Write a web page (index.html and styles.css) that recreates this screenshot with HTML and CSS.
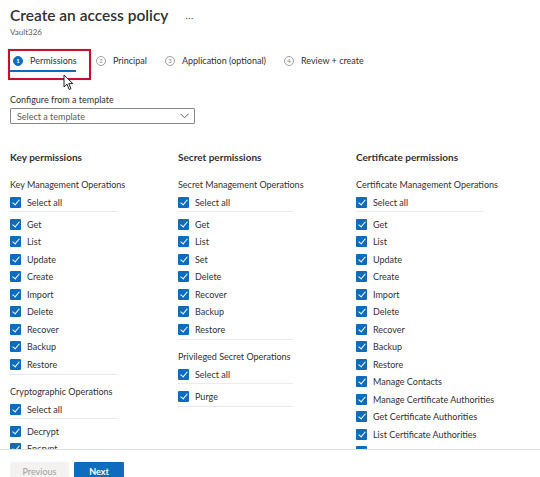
FILE: index.html
```html
<!DOCTYPE html>
<html>
<head>
<meta charset="utf-8">
<link rel="stylesheet" href="styles.css">
</head>
<body>
<div class="page">
  <div class="main">
    <div class="title-row">
      <h1 class="title">Create an access policy</h1>
      <span class="more">···</span>
    </div>
    <div class="subtitle">Vault326</div>

    <div class="tabs">
      <div class="tab tab-active">
        <span class="num num-active">1</span>
        <span class="tab-label">Permissions</span>
      </div>
      <div class="tab">
        <span class="num">2</span>
        <span class="tab-label">Principal</span>
      </div>
      <div class="tab">
        <span class="num">3</span>
        <span class="tab-label">Application (optional)</span>
      </div>
      <div class="tab">
        <span class="num">4</span>
        <span class="tab-label">Review + create</span>
      </div>
      <svg class="cursor" width="11" height="17" viewBox="0 0 11 17"><path d="M1 1 L1 13 L4 10.2 L6.2 15.5 L8 14.7 L5.8 9.6 L9.8 9.6 Z" fill="#fff" stroke="#222" stroke-width="1" stroke-linejoin="round"/></svg>
    </div>

    <div class="template">
      <div class="field-label">Configure from a template</div>
      <div class="select">
        <span>Select a template</span>
        <svg width="9" height="6" viewBox="0 0 9 6"><path d="M0.5 0.8 L4.5 4.8 L8.5 0.8" fill="none" stroke="#605e5c" stroke-width="1"/></svg>
      </div>
    </div>

    <div class="columns">
      <div class="col col-key">
        <h2 class="col-head">Key permissions</h2>
        <div class="group-label">Key Management Operations</div>
        <div class="cb cb-all"><i class="box"></i><span>Select all</span></div>
        <div class="list">
          <div class="cb"><i class="box"></i><span>Get</span></div>
          <div class="cb"><i class="box"></i><span>List</span></div>
          <div class="cb"><i class="box"></i><span>Update</span></div>
          <div class="cb"><i class="box"></i><span>Create</span></div>
          <div class="cb"><i class="box"></i><span>Import</span></div>
          <div class="cb"><i class="box"></i><span>Delete</span></div>
          <div class="cb"><i class="box"></i><span>Recover</span></div>
          <div class="cb"><i class="box"></i><span>Backup</span></div>
          <div class="cb"><i class="box"></i><span>Restore</span></div>
        </div>
        <div class="group-label group-next">Cryptographic Operations</div>
        <div class="cb cb-all"><i class="box"></i><span>Select all</span></div>
        <div class="list">
          <div class="cb"><i class="box"></i><span>Decrypt</span></div>
          <div class="cb"><i class="box"></i><span>Encrypt</span></div>
        </div>
      </div>

      <div class="col col-secret">
        <h2 class="col-head">Secret permissions</h2>
        <div class="group-label">Secret Management Operations</div>
        <div class="cb cb-all"><i class="box"></i><span>Select all</span></div>
        <div class="list">
          <div class="cb"><i class="box"></i><span>Get</span></div>
          <div class="cb"><i class="box"></i><span>List</span></div>
          <div class="cb"><i class="box"></i><span>Set</span></div>
          <div class="cb"><i class="box"></i><span>Delete</span></div>
          <div class="cb"><i class="box"></i><span>Recover</span></div>
          <div class="cb"><i class="box"></i><span>Backup</span></div>
          <div class="cb"><i class="box"></i><span>Restore</span></div>
        </div>
        <div class="group-label group-next">Privileged Secret Operations</div>
        <div class="cb cb-all"><i class="box"></i><span>Select all</span></div>
        <div class="list">
          <div class="cb"><i class="box"></i><span>Purge</span></div>
        </div>
      </div>

      <div class="col col-cert">
        <h2 class="col-head">Certificate permissions</h2>
        <div class="group-label">Certificate Management Operations</div>
        <div class="cb cb-all"><i class="box"></i><span>Select all</span></div>
        <div class="list">
          <div class="cb"><i class="box"></i><span>Get</span></div>
          <div class="cb"><i class="box"></i><span>List</span></div>
          <div class="cb"><i class="box"></i><span>Update</span></div>
          <div class="cb"><i class="box"></i><span>Create</span></div>
          <div class="cb"><i class="box"></i><span>Import</span></div>
          <div class="cb"><i class="box"></i><span>Delete</span></div>
          <div class="cb"><i class="box"></i><span>Recover</span></div>
          <div class="cb"><i class="box"></i><span>Backup</span></div>
          <div class="cb"><i class="box"></i><span>Restore</span></div>
          <div class="cb"><i class="box"></i><span>Manage Contacts</span></div>
          <div class="cb"><i class="box"></i><span>Manage Certificate Authorities</span></div>
          <div class="cb"><i class="box"></i><span>Get Certificate Authorities</span></div>
          <div class="cb"><i class="box"></i><span>List Certificate Authorities</span></div>
          <div class="cb"><i class="box"></i></div>
        </div>
      </div>
    </div>
  </div>

  <div class="footer">
    <button class="btn btn-prev">Previous</button>
    <button class="btn btn-next">Next</button>
  </div>
</div>
</body>
</html>
```

FILE: styles.css
```css
* { box-sizing: border-box; }
html, body {
  margin: 0;
  padding: 0;
  background: #fff;
}
body {
  font-family: "Lato", "Open Sans", "DejaVu Sans", sans-serif;
  color: #323130;
  font-size: 9px;
}
.page {
  width: 540px;
  height: 477px;
  display: flex;
  flex-direction: column;
  overflow: hidden;
}
.main {
  flex: 1;
  overflow: hidden;
  padding: 0 0 0 10px;
}
.title-row {
  display: flex;
  align-items: baseline;
  height: 27px;
  padding-top: 3px;
  white-space: nowrap;
}
.title {
  margin: 0;
  font-size: 15.5px;
  font-weight: 600;
  color: #323130;
  line-height: 24px;
}
.more {
  margin-left: 17px;
  font-size: 9px;
  color: #605e5c;
  letter-spacing: 0.5px;
}
.subtitle {
  font-size: 8px;
  color: #605e5c;
  line-height: 10px;
  margin-top: 0;
}
.tabs {
  position: relative;
  display: flex;
  align-items: flex-start;
  margin-top: 12px;
  height: 31px;
  margin-left: -2px;
  white-space: nowrap;
}
.tab {
  display: flex;
  align-items: center;
  padding: 6px 0 0 4px;
  margin-right: 14px;
}
.tab-active {
  border: 2px solid #c8102e;
  width: 83px;
  height: 31px;
  align-items: flex-start;
  position: relative;
  padding: 4px 0 0 3px;
  margin-right: 1px;
  box-shadow: 0 0 1px rgba(0,0,0,0.25);
}
.tab-active::after {
  content: "";
  position: absolute;
  left: 0;
  bottom: 6px;
  width: 66px;
  height: 2px;
  background: #0f6cbd;
}
.tab-active .num { margin-top: 1px; }
.num {
  width: 10px;
  height: 10px;
  border-radius: 50%;
  border: 1px solid #a19f9d;
  color: #8a8886;
  font-size: 6px;
  line-height: 8px;
  text-align: center;
  flex: none;
}
.num-active {
  background: #0f6cbd;
  border-color: #0f6cbd;
  color: #fff;
  font-weight: 700;
}
.tab-label {
  margin-left: 7px;
  font-size: 9px;
  line-height: 12px;
  color: #323130;
}
.cursor {
  position: absolute;
  left: 55px;
  top: 25px;
}
.template {
  margin-top: 14px;
}
.field-label {
  line-height: 12px;
  color: #323130;
}
.select {
  width: 185px;
  height: 16px;
  border: 1px solid #8a8886;
  border-radius: 1px;
  margin-top: 2px;
  display: flex;
  align-items: center;
  justify-content: space-between;
  padding: 0 5px 0 6px;
  color: #605e5c;
}
.columns {
  display: grid;
  grid-template-columns: 168px 178px 1fr;
  margin-top: 26px;
  white-space: nowrap;
}
.col-head {
  margin: 0;
  font-size: 10px;
  font-weight: 700;
  line-height: 14px;
  color: #323130;
}
.group-label {
  margin-top: 15px;
  line-height: 12px;
  color: #323130;
}
.group-next {
  margin-top: 11px;
}
.cb {
  display: flex;
  align-items: center;
  height: 17.5px;
}
.cb span {
  margin-left: 6px;
  color: #323130;
}
.box {
  width: 11px;
  height: 11px;
  background: #0f6cbd;
  border-radius: 1px;
  flex: none;
  position: relative;
}
.box::after {
  content: "";
  position: absolute;
  left: 3.5px;
  top: 1.2px;
  width: 3px;
  height: 6px;
  border-right: 1.2px solid #fff;
  border-bottom: 1.2px solid #fff;
  transform: rotate(40deg);
}
.cb-all {
  border-bottom: 1px solid #edebe9;
  height: 19px;
  margin-top: 2px;
  margin-bottom: 3.5px;
}
.list {
  border-bottom: 1px solid #edebe9;
  padding-bottom: 1px;
}
.col-key .cb-all, .col-key .list { width: 108px; }
.col-secret .cb-all, .col-secret .list { width: 115px; }
.col-cert .cb-all, .col-cert .list { width: 128px; }
.footer {
  flex: none;
  height: 28px;
  border-top: 1px solid #e1dfdd;
  display: flex;
  align-items: flex-start;
  gap: 5px;
  padding: 12px 0 0 10px;
  background: #fff;
}
.btn {
  font-family: inherit;
  font-size: 9px;
  line-height: 11px;
  height: 15px;
  border-radius: 1px 1px 0 0;
  border: none;
  padding: 3px 0 0 0;
}
.btn-prev {
  width: 59px;
  background: #f3f2f1;
  color: #a19f9d;
}
.btn-next {
  width: 50px;
  background: #0f6cbd;
  color: #fff;
  font-weight: 700;
}
```
